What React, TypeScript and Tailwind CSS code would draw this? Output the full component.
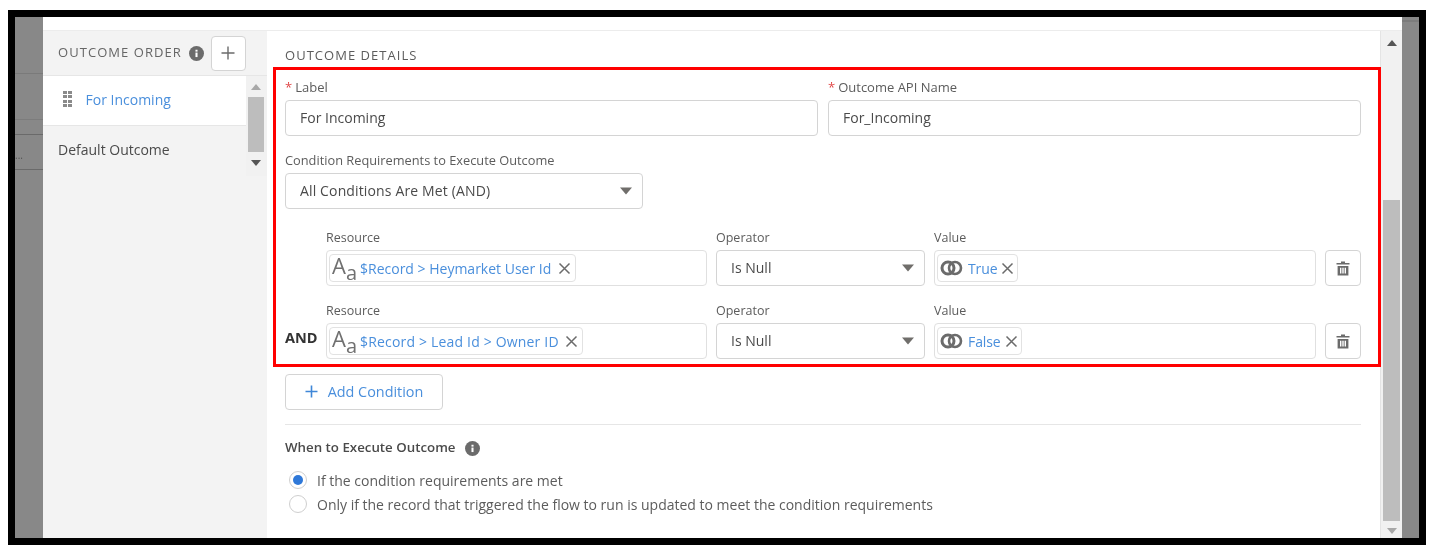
const FONT = "font-['Open_Sans','Noto_Sans',sans-serif]";

function Info({ size = 15 }: { size?: number }) {
  return (
    <svg width={size} height={size} viewBox="0 0 16 16" className="shrink-0">
      <circle cx="8" cy="8" r="8" fill="#6b6b6b" />
      <rect x="6.9" y="7" width="2.2" height="4.8" fill="#fff" />
      <rect x="6.9" y="4" width="2.2" height="2" fill="#fff" />
    </svg>
  );
}

function Caret() {
  return (
    <svg width="14" height="8" viewBox="0 0 14 8" className="shrink-0">
      <path d="M1 0.5h12L7 7.5z" fill="#706e6b" />
    </svg>
  );
}

function Close() {
  return (
    <svg width="13" height="13" viewBox="0 0 13 13" className="shrink-0">
      <path d="M1.5 1.5l10 10M11.5 1.5l-10 10" stroke="#6b6b6b" strokeWidth="1.5" fill="none" />
    </svg>
  );
}

function Rings() {
  return (
    <svg width="23" height="16" viewBox="0 0 23 16" className="shrink-0">
      <circle cx="8" cy="8" r="6" stroke="#6b6b6b" strokeWidth="3" fill="none" />
      <circle cx="15" cy="8" r="6" stroke="#6b6b6b" strokeWidth="2.6" fill="none" />
    </svg>
  );
}

function Trash() {
  return (
    <svg width="14" height="15" viewBox="0 0 14 15">
      <path d="M5 0.5h4v1.5h4.5v1.6H0.5V2H5z" fill="#6b6b6b" />
      <path d="M1.6 5h10.8v9.5H1.6z" fill="#6b6b6b" />
      <path d="M4 6.8h1.4v5.8H4zM6.3 6.8h1.4v5.8H6.3zM8.6 6.8H10v5.8H8.6z" fill="#fff" />
    </svg>
  );
}

function Dots() {
  return (
    <div className="grid grid-cols-2 gap-x-[1.5px] gap-y-[1.3px]">
      {[0, 1, 2, 3, 4, 5, 6, 7].map((i) => (
        <span key={i} className="h-[3px] w-[3.5px] bg-[#8a8a8a]" />
      ))}
    </div>
  );
}

function Pill({ icon, text, textClass }: { icon: "text" | "bool"; text: string; textClass: string }) {
  return (
    <div className={`ml-[2px] flex h-[28px] items-center rounded-[4px] border border-[#e2e2e2] bg-white pl-[2px] ${icon === "text" ? "pr-[4px]" : "pr-[3px]"}`}>
      {icon === "text" ? (
        <span className="mr-[3px] flex w-[25px] items-end font-medium text-[#707070]">
          <span className="-mt-[5px] mb-[2px] text-[22px] leading-[24px]">A</span>
          <span className="-mb-[4px] text-[20px] leading-[20px]">a</span>
        </span>
      ) : (
        <span className="mr-[5px]">
          <Rings />
        </span>
      )}
      <span className={`whitespace-nowrap text-[14px] text-[#4a8fdc] ${textClass}`}>{text}</span>
      <Close />
    </div>
  );
}

function Field({ label, required, value, className }: { label: string; required?: boolean; value: string; className: string }) {
  return (
    <div className={className}>
      <div className="h-[16px] text-[13px] leading-[16px] text-[#5c5c5c]">
        {required && <span className="mr-[3px] text-[#e04848]">*</span>}
        {label}
      </div>
      <div className="mt-[5px] flex h-[36px] items-center rounded-[4px] border border-[#d4d4d4] px-[14px] pb-[1px] text-[14px] text-[#4a4a4a]">
        {value}
      </div>
    </div>
  );
}

function Condition({ and, resource, bool, resourceClass, className }: { and?: boolean; resource: string; bool: string; resourceClass: string; className: string }) {
  return (
    <div className={`flex items-end ${className}`}>
      <div className="flex h-[36px] w-[41px] items-center pb-[6px] text-[14.5px] font-bold text-[#333]">{and ? "AND" : ""}</div>
      <div className="w-[381px]">
        <div className="h-[16px] text-[12.5px] leading-[18px] text-[#5c5c5c]">Resource</div>
        <div className="mt-[5px] flex h-[36px] items-center rounded-[4px] border border-[#e0e0e0]">
          <Pill icon="text" text={resource} textClass={resourceClass} />
        </div>
      </div>
      <div className="ml-[9px] w-[209px]">
        <div className="h-[16px] text-[12.5px] leading-[18px] text-[#5c5c5c]">Operator</div>
        <div className="mt-[5px] flex h-[36px] items-center justify-between rounded-[4px] border border-[#d4d4d4] pr-[9px] pb-[1px] pl-[14px] text-[14px] text-[#4a4a4a]">
          Is Null
          <Caret />
        </div>
      </div>
      <div className="ml-[9px] w-[382px]">
        <div className="h-[16px] text-[12.5px] leading-[18px] text-[#5c5c5c]">Value</div>
        <div className="mt-[5px] flex h-[36px] items-center rounded-[4px] border border-[#e0e0e0]">
          <Pill icon="bool" text={bool} textClass="mr-[4px] tracking-[-0.1px]" />
        </div>
      </div>
      <div className="ml-[9px] flex h-[36px] w-[36px] items-center justify-center rounded-[4px] border border-[#d4d4d4]">
        <Trash />
      </div>
    </div>
  );
}

function ScrollArrow({ up, light }: { up?: boolean; light?: boolean }) {
  return (
    <svg width="10" height="6" viewBox="0 0 10 6" className="shrink-0">
      <path d={up ? "M0 6h10L5 0z" : "M0 0h10L5 6z"} fill={light ? "#a8a8a8" : "#555"} />
    </svg>
  );
}

export default function App() {
  return (
    <div className={`h-[555px] w-[1432px] overflow-hidden bg-white pt-[10px] pl-[8px] ${FONT}`}>
      <div className="flex h-[535px] w-[1418px] border-[7px] border-black bg-[#888888] blur-[0.35px]">
        <div className="flex w-[28px] shrink-0 flex-col">
          <div className="mt-[56px] h-[1px] bg-[#7a7a7a]" />
          <div className="mt-[45px] h-[1px] bg-[#7c7c7c]" />
          <div className="mt-[14px] h-[1px] bg-[#6a6a6a]" />
          <div className="mt-[12px] text-[10px] leading-[16px] text-[#555]">...</div>
          <div className="mt-[6px] h-[1px] bg-[#6a6a6a]" />
        </div>

        <div className="flex w-[1359px] shrink-0 flex-col bg-white">
          <div className="h-[14px] shrink-0 border-b border-[#ececec]" />
          <div className="flex min-h-0 flex-1">
            <div className="flex w-[224px] shrink-0 flex-col bg-[#f3f3f3]">
              <div className="flex h-[45px] shrink-0 items-center border-b border-[#e6e6e6] pl-[15px]">
                <span className="text-[13px] tracking-[1.05px] text-[#666]">OUTCOME ORDER</span>
                <span className="ml-[7px]">
                  <Info />
                </span>
                <span className="ml-[7px] flex h-[35px] w-[35px] items-center justify-center rounded-[4px] border border-[#d4d4d4] bg-white">
                  <svg width="14" height="14" viewBox="0 0 14 14">
                    <path d="M7 0.5v13M0.5 7h13" stroke="#6b6b6b" strokeWidth="1.4" />
                  </svg>
                </span>
              </div>
              <div className="flex">
                <div className="w-[203px] shrink-0">
                  <div className="flex h-[50px] items-center border-b border-[#e6e6e6] bg-white pb-[3px] pl-[20px]">
                    <Dots />
                    <span className="ml-[14px] text-[14px] text-[#4a8fdc]">For Incoming</span>
                  </div>
                  <div className="flex h-[50px] items-center pb-[3px] pl-[15px] text-[14px] text-[#4a4a4a]">Default Outcome</div>
                </div>
                <div className="flex h-[100px] w-[21px] flex-col items-center bg-[#f1f1f1] pt-[8px] pr-[2px]">
                  <ScrollArrow up light />
                  <div className="mt-[7px] h-[55px] w-[16px] bg-[#bdbdbd]" />
                  <div className="mt-[8px]">
                    <ScrollArrow />
                  </div>
                </div>
              </div>
            </div>

            <div className="flex min-w-0 flex-1">
              <div className="w-[1113px] shrink-0 pl-[6px]">
                <div className="h-[36px] pt-[16px] pl-[12px] text-[13px] leading-[16px] tracking-[1.03px] text-[#5c5c5c]">
                  OUTCOME DETAILS
                </div>
                <div className="relative z-10 -mr-[1px] border-[3px] border-[#ff0000] pt-[9px] pr-[17px] pb-[5px] pl-[9px]">
                  <div className="flex gap-[10px]">
                    <Field required label="Label" value="For Incoming" className="w-[533px]" />
                    <Field required label="Outcome API Name" value="For_Incoming" className="w-[533px]" />
                  </div>
                  <div className="mt-[16px] h-[16px] text-[12.8px] leading-[16px] text-[#5c5c5c]">
                    Condition Requirements to Execute Outcome
                  </div>
                  <div className="mt-[5px] flex h-[36px] w-[358px] items-center justify-between rounded-[4px] border border-[#d4d4d4] pr-[9px] pb-[1px] pl-[14px] text-[14px] tracking-[0.14px] text-[#4a4a4a]">
                    All Conditions Are Met (AND)
                    <Caret />
                  </div>
                  <Condition resource="$Record > Heymarket User Id" resourceClass="mr-[7px]" bool="True" className="mt-[20px]" />
                  <Condition and resource="$Record > Lead Id > Owner ID" resourceClass="mr-[6px] tracking-[0.18px]" bool="False" className="mt-[16px]" />
                </div>
                <div className="pl-[12px]">
                  <div className="mt-[7px] flex h-[36px] w-[158px] items-center justify-center gap-[10px] rounded-[4px] border border-[#d4d4d4] pb-[1px] text-[14.4px] text-[#4a8fdc]">
                    <svg width="13" height="13" viewBox="0 0 13 13">
                      <path d="M6.5 0.5v12M0.5 6.5h12" stroke="#3f87d8" strokeWidth="1.6" />
                    </svg>
                    Add Condition
                  </div>
                  <div className="mt-[14px] h-[1px] w-[1076px] bg-[#e6e6e6]" />
                  <div className="mt-[15px] flex h-[16px] items-center text-[13.3px] font-semibold text-[#4a4a4a]">
                    When to Execute Outcome
                    <span className="ml-[10px]">
                      <Info />
                    </span>
                  </div>
                  <div className="mt-[12px] flex h-[24px] items-center text-[14px] text-[#5c5c5c]">
                    <span className="mr-[10px] ml-[4px] flex h-[18px] w-[18px] items-center justify-center rounded-full border border-[#cfcfcf]">
                      <span className="h-[10px] w-[10px] rounded-full bg-[#2f78d8]" />
                    </span>
                    If the condition requirements are met
                  </div>
                  <div className="flex h-[24px] items-center text-[14px] text-[#5c5c5c]">
                    <span className="mr-[10px] ml-[4px] h-[18px] w-[18px] rounded-full border border-[#cfcfcf]" />
                    Only if the record that triggered the flow to run is updated to meet the condition requirements
                  </div>
                </div>
              </div>
              <div className="flex w-[22px] shrink-0 flex-col items-center border-l border-[#e4e4e4] bg-[#f1f1f1] pt-[9px] pb-[4px]">
                <ScrollArrow up />
                <div className="mt-[154px] min-h-0 w-[17px] flex-1 bg-[#bdbdbd]" />
                <div className="mt-[7px]">
                  <ScrollArrow light />
                </div>
              </div>
            </div>
          </div>
        </div>

        <div className="flex flex-1 flex-col">
          <div className="mt-[3px] h-[2px] bg-[#7c7c7c]" />
        </div>
      </div>
    </div>
  );
}
